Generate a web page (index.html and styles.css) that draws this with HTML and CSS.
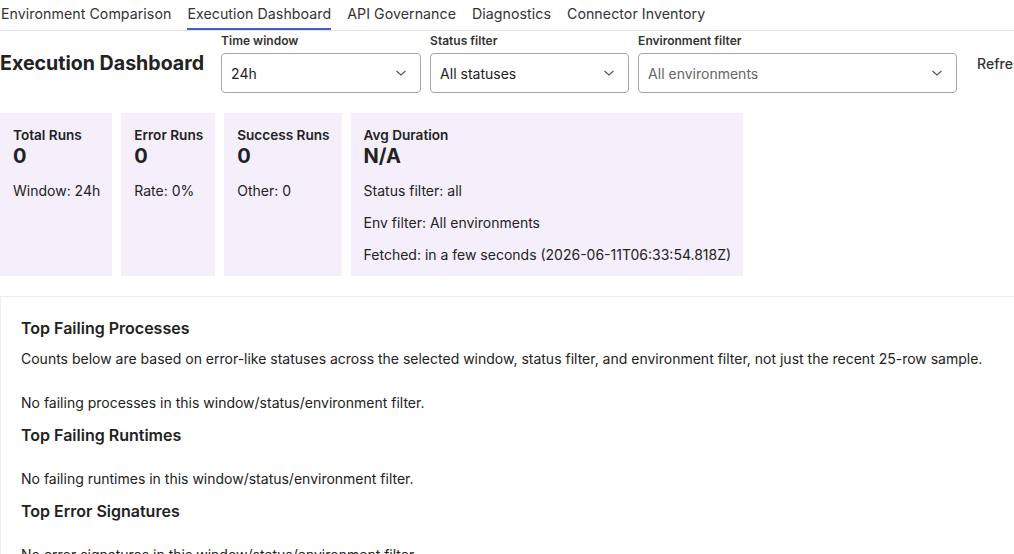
FILE: index.html
```html
<!DOCTYPE html>
<html lang="en">
<head>
<meta charset="utf-8">
<title>Execution Dashboard</title>
<link rel="stylesheet" href="styles.css">
</head>
<body>
<nav class="tabs">
  <span class="tab">Environment Comparison</span>
  <span class="tab active">Execution Dashboard</span>
  <span class="tab">API Governance</span>
  <span class="tab">Diagnostics</span>
  <span class="tab">Connector Inventory</span>
</nav>

<header class="toolbar">
  <h1 class="title">Execution Dashboard</h1>
  <div class="field w-time">
    <span class="label">Time window</span>
    <div class="select"><span>24h</span><svg class="chev" width="12" height="8" viewBox="0 0 12 8"><path d="M1.5 2 L6 6 L10.5 2" fill="none" stroke="#555" stroke-width="1.2"/></svg></div>
  </div>
  <div class="field w-status">
    <span class="label">Status filter</span>
    <div class="select"><span>All statuses</span><svg class="chev" width="12" height="8" viewBox="0 0 12 8"><path d="M1.5 2 L6 6 L10.5 2" fill="none" stroke="#555" stroke-width="1.2"/></svg></div>
  </div>
  <div class="field w-env">
    <span class="label">Environment filter</span>
    <div class="select"><span class="muted">All environments</span><svg class="chev" width="12" height="8" viewBox="0 0 12 8"><path d="M1.5 2 L6 6 L10.5 2" fill="none" stroke="#555" stroke-width="1.2"/></svg></div>
  </div>
  <button class="refresh">Refresh</button>
</header>

<section class="cards">
  <div class="card">
    <div class="card-title">Total Runs</div>
    <div class="card-value">0</div>
    <p class="card-line">Window: 24h</p>
  </div>
  <div class="card">
    <div class="card-title">Error Runs</div>
    <div class="card-value">0</div>
    <p class="card-line">Rate: 0%</p>
  </div>
  <div class="card">
    <div class="card-title">Success Runs</div>
    <div class="card-value">0</div>
    <p class="card-line">Other: 0</p>
  </div>
  <div class="card">
    <div class="card-title">Avg Duration</div>
    <div class="card-value">N/A</div>
    <p class="card-line">Status filter: all</p>
    <p class="card-line">Env filter: All environments</p>
    <p class="card-line">Fetched: in a few seconds (2026-06-11T06:33:54.818Z)</p>
  </div>
</section>

<section class="panel">
  <h3 class="sec-title">Top Failing Processes</h3>
  <p class="note">Counts below are based on error-like statuses across the selected window, status filter, and environment filter, not just the recent 25-row sample.</p>
  <p class="empty first">No failing processes in this window/status/environment filter.</p>
  <h3 class="sec-title">Top Failing Runtimes</h3>
  <p class="empty">No failing runtimes in this window/status/environment filter.</p>
  <h3 class="sec-title">Top Error Signatures</h3>
  <p class="empty">No error signatures in this window/status/environment filter.</p>
</section>
</body>
</html>
```
FILE: styles.css
```css
html, body {
  margin: 0;
  padding: 0;
  background: #fff;
  overflow: hidden;
}
body {
  font-family: Inter, "Noto Sans", sans-serif;
  color: #222;
  font-size: 14px;
  width: 1040px;
}

.tabs {
  display: flex;
  gap: 16px;
  border-bottom: 1px solid #e3e3e3;
  padding-left: 1px;
}
.tab {
  font-size: 14.2px;
  letter-spacing: 0.05px;
  line-height: 17px;
  padding: 5px 0 6px;
  border-bottom: 2px solid transparent;
  color: #333;
}
.tab.active {
  border-bottom-color: #3d62c4;
}

.toolbar {
  display: flex;
  align-items: center;
  gap: 9px;
  margin-top: 3px;
}
.title {
  margin: 0 8px 0 0;
  font-size: 19.6px;
  font-weight: 700;
  line-height: 24px;
  color: #222;
  padding-bottom: 2px;
}
.field {
  display: flex;
  flex-direction: column;
  gap: 5px;
}
.label {
  font-size: 12px;
  font-weight: 600;
  line-height: 14px;
  color: #333;
}
.select {
  box-sizing: border-box;
  height: 40px;
  border: 1px solid #a8a8a8;
  border-radius: 4px;
  display: flex;
  align-items: center;
  justify-content: space-between;
  padding: 0 13px 0 9px;
  font-size: 14px;
  color: #222;
  background: #fff;
}
.select .muted { color: #666; }
.chev { display: block; }
.w-time { width: 200px; }
.w-status { width: 199px; }
.w-env { width: 319px; }
.refresh {
  font-family: inherit;
  font-size: 14px;
  font-weight: 500;
  color: #333;
  background: none;
  border: 0;
  padding: 0 0 0 11px;
}

.cards {
  display: flex;
  gap: 9px;
  margin-top: 20px;
  align-items: stretch;
}
.card {
  background: #f5effb;
  padding: 13px 12px 12px 13px;
}
.card-title {
  font-size: 13.6px;
  font-weight: 600;
  line-height: 18px;
  color: #222;
}
.card-value {
  font-size: 20px;
  font-weight: 700;
  line-height: 24px;
  color: #222;
}
.card-line {
  margin: 14px 0 0;
  font-size: 14px;
  line-height: 18px;
  color: #222;
}

.panel {
  margin-top: 20px;
  border-top: 1px solid #ececec;
  border-left: 1px solid #f0f0f0;
  padding: 20px 20px;
}
.sec-title {
  margin: 0;
  font-size: 16px;
  font-weight: 600;
  line-height: 22px;
  color: #222;
}
.note {
  margin: 11px 0 0;
  font-size: 14px;
  line-height: 18px;
}
.empty {
  margin: 24px 0 12px;
  font-size: 14px;
  line-height: 18px;
}
.empty.first {
  margin-top: 26px;
}
```
